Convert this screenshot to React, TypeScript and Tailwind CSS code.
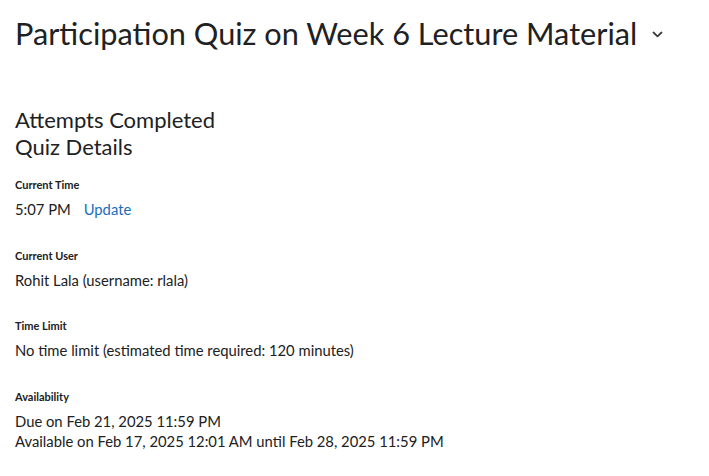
import React from 'react';

const Field: React.FC<{ label: string; children: React.ReactNode }> = ({ label, children }) => (
  <div className="mb-[28.5px]">
    <div className="text-[11px] font-bold leading-[16px] text-[#202122]">{label}</div>
    <div className="mt-[6px] text-[14.8px] leading-[20px] text-[#202122]">{children}</div>
  </div>
);

const App: React.FC = () => {
  return (
    <div className="min-h-screen bg-white px-[15px] pt-[13px]" style={{ fontFamily: 'Lato, "Liberation Sans", sans-serif' }}>
      <div className="flex items-center">
        <h1 className="text-[30.7px] leading-[42px] text-[#202122]">Participation Quiz on Week 6 Lecture Material</h1>
        <svg className="ml-[15px] mt-[1px]" width="11" height="7" viewBox="0 0 11 7" fill="none">
          <path d="M1.5 1.5 L5.5 5.3 L9.5 1.5" stroke="#3a3c3e" strokeWidth="1.8" strokeLinecap="round" strokeLinejoin="round" />
        </svg>
      </div>

      <h2 className="mt-[51px] text-[22px] leading-[27px] text-[#202122]">
        Attempts Completed
        <br />
        Quiz Details
      </h2>

      <div className="mt-[17px]">
        <Field label="Current Time">
          5:07 PM <a className="ml-[9px] text-[#1a6cc0]">Update</a>
        </Field>
        <Field label="Current User">Rohit Lala (username: rlala)</Field>
        <Field label="Time Limit">No time limit (estimated time required: 120 minutes)</Field>
        <Field label="Availability">
          Due on Feb 21, 2025 11:59 PM
          <br />
          Available on Feb 17, 2025 12:01 AM until Feb 28, 2025 11:59 PM
        </Field>
      </div>
    </div>
  );
};

export default App;
